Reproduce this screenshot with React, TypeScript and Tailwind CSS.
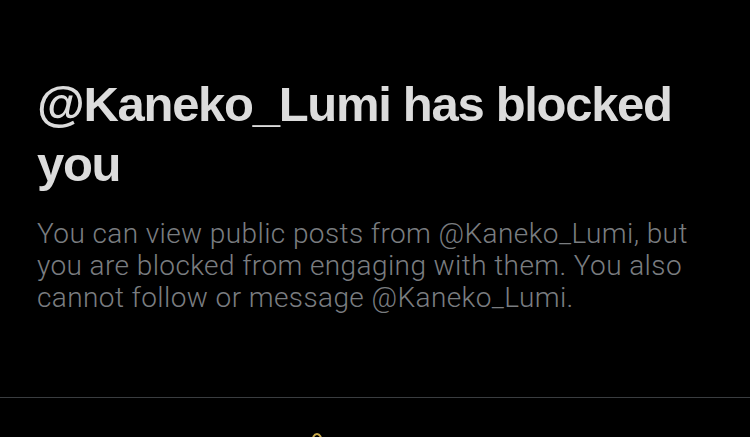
export default function App() {
  return (
    <div className="w-[750px] h-[437px] bg-black overflow-hidden flex flex-col">
      <div className="px-[37px] pt-[74px]">
        <h1 className="font-['Liberation_Sans',Arial,sans-serif] font-bold text-[49px] leading-[60px] text-[#dcdcdc] tracking-[-1.3px]">
          @Kaneko_Lumi has blocked you
        </h1>
        <p className="mt-[24px] font-['Roboto',sans-serif] font-light text-[28px] leading-[32px] text-[#7a7d80] tracking-[0.4px]">
          You can view public posts from @Kaneko_Lumi, but you are blocked from engaging with them. You also cannot follow or message @Kaneko_Lumi.
        </p>
      </div>
      <div className="mt-auto h-px bg-[#3a3d40]" />
      <div className="h-[39px] flex justify-start pl-[312px] items-end">
        <svg width="10" height="5" viewBox="0 0 10 5">
          <path d="M1 5 Q5 -1 9 5" stroke="#c9a94a" strokeWidth="2" fill="none" />
        </svg>
      </div>
    </div>
  );
}
